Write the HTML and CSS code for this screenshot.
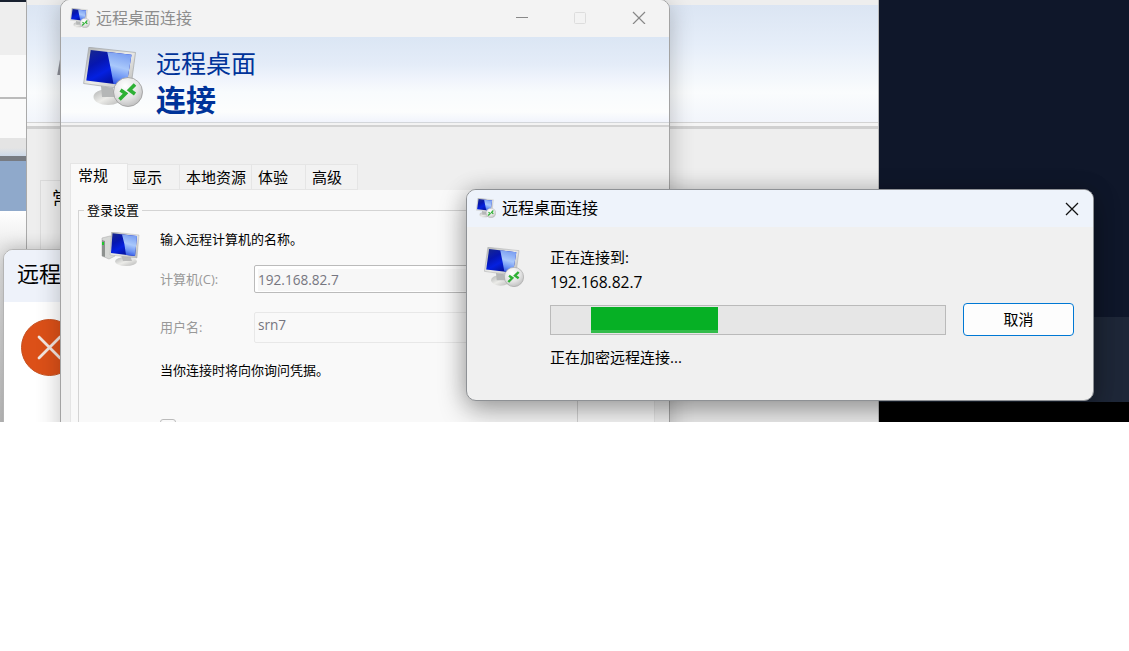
FILE: index.html
```html
<!DOCTYPE html>
<html lang="zh-CN">
<head>
<meta charset="utf-8">
<title>远程桌面连接</title>
<link rel="stylesheet" href="styles.css">
</head>
<body>
<svg class="defs" width="0" height="0" aria-hidden="true">
  <defs>
    <linearGradient id="dark" x1="0" y1="0" x2=".7" y2="1"><stop offset="0" stop-color="#1a2a8a"/><stop offset=".35" stop-color="#0616b0"/><stop offset=".6" stop-color="#0420e0"/><stop offset="1" stop-color="#050c80"/></linearGradient>
    <linearGradient id="light" x1=".3" y1="0" x2=".1" y2="1"><stop offset="0" stop-color="#7ea2f2"/><stop offset=".4" stop-color="#a9c8fb"/><stop offset=".7" stop-color="#6a92f4"/><stop offset="1" stop-color="#1c3ee0"/></linearGradient>
    <linearGradient id="metal" x1="0" y1="0" x2="1" y2="1"><stop offset="0" stop-color="#b0b2b2"/><stop offset=".5" stop-color="#ecece9"/><stop offset="1" stop-color="#b5b5b5"/></linearGradient>
    <radialGradient id="ball" cx=".4" cy=".3" r=".75"><stop offset="0" stop-color="#fff"/><stop offset=".6" stop-color="#e3e3e3"/><stop offset="1" stop-color="#bcbcbc"/></radialGradient>
    <symbol id="monitor" viewBox="0 0 60 60">
      <ellipse cx="25" cy="50" rx="14.5" ry="8" fill="url(#metal)"/>
      <path d="M18 39l12 2 3 9H19z" fill="#b5b7b7"/>
      <path d="M5.800 .3L52.500 5.500 47.500 43 .6 36.500z" fill="url(#metal)" stroke="#a4a6a8" stroke-width=".7"/>
      <path d="M7.700 3L48.500 7.700 43.500 38.500 3.300 33.600z" fill="url(#dark)"/>
      <path d="M24.300 5L48.500 7.700l-5 30.800-13-1.600Q28 22 24.300 5z" fill="url(#light)"/>
    </symbol>
    <symbol id="rdp" viewBox="0 0 60 60">
      <use href="#monitor" width="60" height="60"/>
      <circle cx="45" cy="45" r="14.5" fill="url(#ball)" stroke="#9b9b9b" stroke-width=".8"/>
      <path d="M37.500 43l5 3.500-6 6M52 37.500L46.500 43l5.500 4" fill="none" stroke="#2eb135" stroke-width="3.600"/>
    </symbol>
    <symbol id="pc" viewBox="0 0 40 35">
      <path d="M1 6l8-2 5 1v19l-6 3-7-3z" fill="#d6d8d6" stroke="#b0b0b0" stroke-width=".6"/>
      <path d="M1 8l3 1v16l-3-1z" fill="#8d918f"/><path d="M1 10h2v3H1z" fill="#1fc72e"/>
      <ellipse cx="25" cy="29.500" rx="11" ry="4.500" fill="url(#metal)"/>
      <path d="M20 23h9l2 6h-9z" fill="#bbb"/>
      <path d="M10.500 -.2l27.500 3.200-2 23-27-3z" fill="url(#metal)" stroke="#aaa" stroke-width=".4"/>
      <path d="M11.500 1.300l24.500 2.700-2 20-24-3z" fill="url(#dark)"/>
      <path d="M21 2.400L36 4l-2 20-9-1Q24 12 21 2.400z" fill="url(#light)"/>
    </symbol>
  </defs>
</svg>
<main class="desktop">
  <div class="backdrop"><div class="sky"></div><div class="slate"></div><div class="ground"></div></div>
  <div class="strip"><i class="s1"></i><i class="s2"></i><i class="s3"></i><i class="s4"></i><i class="s5"></i><i class="s6"></i></div>
  <section class="window back">
    <div class="back-banner"><i class="sliver"></i></div><div class="back-rule"></div>
    <div class="back-page">常规</div>
  </section>
  <section class="window error">
    <header>远程桌面</header>
    <svg class="error-icon" width="57" height="57" viewBox="0 0 57 57"><circle cx="28.500" cy="28.500" r="28" fill="#dc5018" stroke="#c5501f"/><path d="M18 18l21 21M39 18L18 39" stroke="#f3e5df" stroke-width="2.800" stroke-linecap="round"/></svg>
  </section>
  <section class="window app">
    <header class="titlebar">
      <svg width="20" height="20"><use href="#rdp" width="20" height="20"/></svg><h1>远程桌面连接</h1>
      <svg class="controls" width="132" height="14" viewBox="0 0 132 14" fill="none"><path d="M1 7.500h12" stroke="#888"/><rect x="59.500" y="2.500" width="11" height="11" rx="1" stroke="#ddd"/><path d="M118 2l12 12M130 2L118 14" stroke="#878787" stroke-width="1.200"/></svg>
    </header>
    <div class="banner"><svg width="60" height="60"><use href="#rdp" width="60" height="60"/></svg><div class="brand"><span>远程桌面</span><b>连接</b></div></div>
    <div class="rule"></div>
    <nav class="tabs"><span class="tab active">常规</span><span class="tab t2">显示</span><span class="tab t3">本地资源</span><span class="tab t4">体验</span><span class="tab t5">高级</span></nav>
    <div class="page">
      <fieldset>
        <legend>登录设置</legend>
        <svg class="pc" width="40" height="35"><use href="#pc" width="40" height="35"/></svg>
        <div class="form">
          <p class="prompt">输入远程计算机的名称。</p>
          <div class="row"><label>计算机(C):</label><div class="field"><span>192.168.82.7</span></div></div>
          <div class="row user"><label>用户名:</label><div class="field plain">srn7</div></div>
          <p class="note">当你连接时将向你询问凭据。</p>
          <i class="check"></i>
        </div>
      </fieldset>
    </div>
  </section>
  <section class="window dialog">
    <header class="titlebar"><svg width="20" height="20"><use href="#rdp" width="20" height="20"/></svg><h2>远程桌面连接</h2><svg class="close" width="14" height="14"><path d="M1 1l12 12M13 1L1 13" stroke="#111" stroke-width="1.250"/></svg></header>
    <div class="content">
      <svg width="40" height="40"><use href="#rdp" width="40" height="40"/></svg>
      <div class="status"><p>正在连接到:</p><p class="host">192.168.82.7</p><div class="action"><div class="progress"><i></i></div><button>取消</button></div><p class="phase">正在加密远程连接...</p></div>
    </div>
  </section>
</main>
</body>
</html>
```
FILE: styles.css
```css
* { box-sizing: border-box; }
body { margin: 0; background: #fff; font-family: "Open Sans", "Noto Sans CJK SC", sans-serif; font-size: 15px; color: #000; }
h1, h2, p { margin: 0; font-weight: 400; }
.defs { position: absolute; }
svg { display: block; flex: none; }
.desktop { position: relative; width: 1129px; height: 422px; overflow: hidden; background: #eee; }
.window { position: absolute; }

.backdrop { display: flex; flex-direction: column; height: 422px; margin-left: 879px; }
.sky { height: 317px; background: #0f172a; }
.slate { height: 85px; background: #1e2738; }
.ground { height: 20px; background: #000; }

.strip { position: absolute; left: 0; top: 0; width: 27px; height: 422px; display: flex; flex-direction: column; }
.s1 { height: 55px; background: #eee; border-top: 2px solid #18202f; }
.s2 { height: 44px; background: #fafafa; border-bottom: 2px solid #bbb; }
.s3 { height: 39px; background: #fafafa; }
.s4 { height: 18px; background: linear-gradient(#e4e4e4 10px, #ccd8e8); }
.s5 { height: 55px; background: #8fa9cb; border-top: 5px solid #777b82; }
.s6 { flex: 1; background: linear-gradient(#fff, #ececec 35px, #c4c4c4); }

.back { left: 26px; top: 0; width: 853px; height: 440px; padding-top: 5px; background: #eee; border-left: 1px solid #aaa; border-right: 1px solid #bbb; }
.back-banner { height: 117px; padding: 50px 0 0 32px; background: linear-gradient(#dbe5f3, #e6eef9 35%, #fafcfd 75%, #f2f5fb); }
.sliver { display: block; width: 5px; height: 20px; background: #8c8f98; transform: skewX(-10deg); }
.back-rule { height: 7px; border-top: 1px solid #d3d3d3; border-bottom: 3px solid #d0d0d0; background: #f5f5f5; }
.back-page { width: 600px; height: 270px; margin: 51px 0 0 13px; padding: 2px 0 0 11px; border: 1px solid #ddd; background: #eee; font: 18px/28px "Noto Sans CJK SC", sans-serif; }

.error { left: 3px; top: 249px; width: 400px; height: 220px; background: #fff; border: 1px solid #b4b4b4; border-radius: 10px; box-shadow: 0 0 18px rgba(0,0,0,.25); overflow: hidden; }
.error header { height: 52px; padding-left: 13px; background: #eef2fa; font-size: 22px; line-height: 47px; }
.error-icon { margin: 17px 0 0 17px; }

.app { left: 60px; top: -1px; width: 610px; height: 480px; border: 1px solid #a3a3a3; border-radius: 10px; background: #efefef; box-shadow: 0 5px 25px rgba(0,0,0,.24); overflow: hidden; }
.titlebar { display: flex; align-items: center; height: 37px; padding: 0 0 2px 9px; background: #f3f3f3; }
.titlebar h1, .titlebar h2 { font-size: 16px; line-height: 24px; margin-left: 6px; }
.titlebar h1 { color: #8d8d8d; }
.controls { margin-left: auto; margin-right: 22px; margin-top: -2px; }
.banner { display: flex; height: 85px; padding: 10px 0 0 22px; background: linear-gradient(#dbe6f4, #e4ecf8 32%, #f0f4fc 50%, #f8fbfd 65%, #fcfdfd 88%, #f1f4fc); }
.brand { display: flex; flex-direction: column; margin: -2px 0 0 13px; color: #003399; }
.brand span { font-size: 25px; line-height: 36px; }
.brand b { font-size: 30px; line-height: 37px; }
.rule { height: 5px; border-top: 1px solid #d3d6da; border-bottom: 2px solid #d2d2d2; background: #f3f3f3; }
.tabs { display: flex; align-items: flex-end; height: 63px; padding-left: 9px; }
.tab { height: 26px; border: 1px solid #e5e5e5; border-left: 0; background: #f2f2f2; line-height: 25px; }
.tab.active { width: 58px; height: 27px; padding-left: 7px; border-left: 1px solid #e5e5e5; border-bottom: 0; background: #f9f9f9; line-height: 22px; }
.t2 { width: 52px; padding-left: 4px; } .t3 { width: 72px; padding-left: 6px; } .t4 { width: 54px; padding-left: 6px; } .t5 { width: 52px; padding-left: 6px; }
.page { width: 585px; height: 300px; margin-left: 9px; padding: 12px 0 0 7px; background: #f9f9f9; border: 1px solid #e5e5e5; border-top: 0; }
fieldset { display: flex; width: 500px; height: 280px; margin: 0; padding: 0 0 0 22px; border: 1px solid #d4d4d4; font-size: 13px; }
legend { margin-left: -17px; padding: 0 3px; line-height: 16px; font-size: 13px; }
.pc { margin-top: 14px; }
.form { margin: 11px 0 0 19px; }
.prompt { line-height: 20px; }
.row { display: flex; align-items: center; height: 28px; margin-top: 16px; color: #999; }
label { width: 94px; line-height: 20px; }
.field { width: 300px; height: 28px; padding: 3px; border: 1px solid #bbb; border-radius: 2px; background: #fff; color: #767680; font-size: 13.600px; line-height: 18px; }
.field span { display: block; background: #f7f7f7; line-height: 22px; }
.user { height: 31px; margin-top: 19px; }
.user label { margin-top: -2px; }
.field.plain { height: 31px; background: #f9f9f9; border-color: #e8e8e8; }
.note { margin-top: 17px; line-height: 20px; }
.check { display: block; width: 16px; height: 16px; margin-top: 39px; border: 1px solid #bbb; border-radius: 3px; }

.dialog { left: 466px; top: 189px; width: 628px; height: 212px; border: 1px solid #8e9195; border-radius: 10px; background: #f0f0f0; box-shadow: 0 10px 28px rgba(0,0,0,.32), 0 0 22px rgba(0,0,0,.16); overflow: hidden; }
.dialog .titlebar { background: #eef3fb; }
.close { margin: 2px 14px 0 auto; }
.content { display: flex; padding: 20px 19px 0 17px; }
.status { width: 524px; margin: -1px 0 0 26px; }
.status p { line-height: 22px; }
.status .host { margin-top: 3px; font-size: 15.600px; }
.action { display: flex; align-items: center; justify-content: space-between; height: 33px; margin-top: 10px; }
.progress { width: 396px; height: 30px; padding: 1px 0 0 40px; border: 1px solid #bababa; background: #e6e6e6; }
.progress i { display: block; width: 127px; height: 26px; background: #06b025; border-bottom: 3px solid #32bc4a; }
button { width: 111px; height: 33px; padding: 0 0 2px; border: 1px solid #0078d4; border-radius: 4px; background: #fdfdfd; font: 15px/29px "Noto Sans CJK SC", sans-serif; color: #000; }
.status .phase { margin-top: 10px; }
```
